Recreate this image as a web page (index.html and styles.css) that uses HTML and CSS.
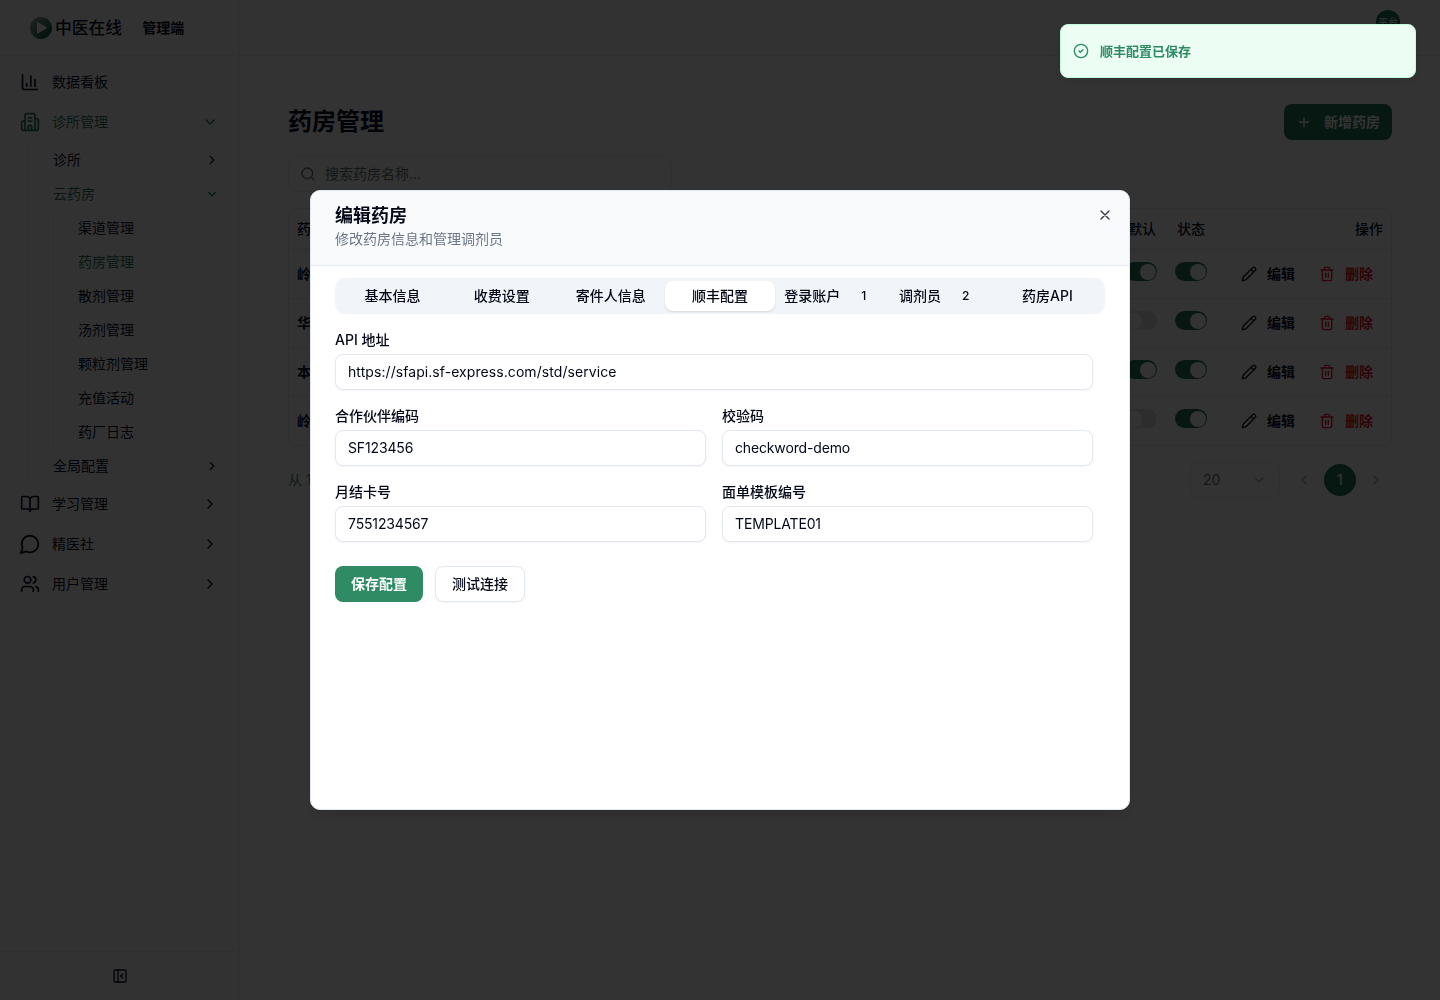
FILE: index.html
```html
<!DOCTYPE html>
<html lang="zh-CN">
<head>
  <meta charset="utf-8"/>
  <title>药房管理 - 中医在线</title>
  <link rel="stylesheet" href="styles.css">
</head>
<body>
  <!-- shared icon shapes -->
  <svg class="symbols" width="0" height="0">
    <symbol id="chevron-right" viewBox="0 0 24 24"><path d="m9 18 6-6-6-6"/></symbol>
    <symbol id="chevron-left" viewBox="0 0 24 24"><path d="m15 18-6-6 6-6"/></symbol>
    <symbol id="chevron-down" viewBox="0 0 24 24"><path d="m6 9 6 6 6-6"/></symbol>
    <symbol id="pencil" viewBox="0 0 24 24"><path d="M21.17 6.81a1 1 0 0 0-3.98-3.98L3.84 16.17a2 2 0 0 0-.5.83l-1.32 4.35a.5.5 0 0 0 .62.62l4.35-1.32a2 2 0 0 0 .83-.5zM15 5l4 4"/></symbol>
    <symbol id="trash" viewBox="0 0 24 24"><path d="M3 6h18M19 6v14a2 2 0 0 1-2 2H7a2 2 0 0 1-2-2V6M8 6V4a2 2 0 0 1 2-2h4a2 2 0 0 1 2 2v2M10 11v6M14 11v6"/></symbol>
  </svg>

  <div class="app">
    <aside class="sidebar">
      <div class="brand">
        <svg class="brand-logo" viewBox="0 0 22 22">
          <defs>
            <linearGradient id="logo-fill" x1="0" y1="0" x2="1" y2="1">
              <stop offset="0.1" stop-color="#9aa5a5"/>
              <stop offset="0.75" stop-color="#1f6650"/>
            </linearGradient>
          </defs>
          <circle cx="11" cy="11" r="11" fill="url(#logo-fill)"/>
          <path d="M7.5 5.5v10.6l9-5.3z" fill="#fff" stroke="#fff" stroke-linejoin="round"/>
        </svg>
        <span class="brand-name">中医在线</span>
        <span class="brand-role">管理端</span>
      </div>
      <nav class="menu">
        <a class="menu-item">
          <svg class="icon" viewBox="0 0 24 24"><path d="M3 3v16a2 2 0 0 0 2 2h16M18 17V9M13 17V5M8 17v-3"/></svg>
          <span>数据看板</span>
        </a>
        <a class="menu-item active">
          <svg class="icon" viewBox="0 0 24 24"><path d="M6 22V4a2 2 0 0 1 2-2h8a2 2 0 0 1 2 2v18M6 11H4a2 2 0 0 0-2 2v7a2 2 0 0 0 2 2h16a2 2 0 0 0 2-2V10a2 2 0 0 0-2-2h-2M10 7h4M10 11h4M10 22v-4a2 2 0 0 1 4 0v4"/></svg>
          <span>诊所管理</span>
          <svg class="chevron"><use href="#chevron-down"/></svg>
        </a>
        <div class="submenu">
          <a class="sub-item"><span>诊所</span><svg class="chevron"><use href="#chevron-right"/></svg></a>
          <a class="sub-item active"><span>云药房</span><svg class="chevron"><use href="#chevron-down"/></svg></a>
          <div class="submenu nested">
            <a class="sub-item">渠道管理</a>
            <a class="sub-item active">药房管理</a>
            <a class="sub-item">散剂管理</a>
            <a class="sub-item">汤剂管理</a>
            <a class="sub-item">颗粒剂管理</a>
            <a class="sub-item">充值活动</a>
            <a class="sub-item">药厂日志</a>
          </div>
          <a class="sub-item"><span>全局配置</span><svg class="chevron"><use href="#chevron-right"/></svg></a>
        </div>
        <a class="menu-item">
          <svg class="icon" viewBox="0 0 24 24"><path d="M12 7v14M3 18a1 1 0 0 1-1-1V4a1 1 0 0 1 1-1h5a4 4 0 0 1 4 4 4 4 0 0 1 4-4h5a1 1 0 0 1 1 1v13a1 1 0 0 1-1 1h-6a3 3 0 0 0-3 3 3 3 0 0 0-3-3z"/></svg>
          <span>学习管理</span>
          <svg class="chevron"><use href="#chevron-right"/></svg>
        </a>
        <a class="menu-item">
          <svg class="icon" viewBox="0 0 24 24"><path d="M7.9 20A9 9 0 1 0 4 16.1L2 22Z" transform="translate(-1.2 -1.2) scale(1.1)"/></svg>
          <span>精医社</span>
          <svg class="chevron"><use href="#chevron-right"/></svg>
        </a>
        <a class="menu-item">
          <svg class="icon" viewBox="0 0 24 24"><path d="M16 21v-2a4 4 0 0 0-4-4H6a4 4 0 0 0-4 4v2M22 21v-2a4 4 0 0 0-3-3.87M16 3.13a4 4 0 0 1 0 7.75"/><circle cx="9" cy="7" r="4"/></svg>
          <span>用户管理</span>
          <svg class="chevron"><use href="#chevron-right"/></svg>
        </a>
      </nav>
      <div class="sidebar-footer">
        <svg class="icon" viewBox="0 0 24 24"><rect x="3" y="3" width="18" height="18" rx="2"/><path d="M9 3v18M16 15l-3-3 3-3"/></svg>
      </div>
    </aside>

    <main class="main">
      <header class="topbar"><div class="avatar">平台</div></header>
      <div class="content">
        <div class="page-head">
          <h1>药房管理</h1>
          <button class="btn-add"><svg class="icon" viewBox="0 0 24 24"><path d="M5 12h14M12 5v14"/></svg>新增药房</button>
        </div>
        <div class="search">
          <svg class="icon" viewBox="0 0 24 24"><circle cx="11" cy="11" r="8"/><path d="m21 21-4.3-4.3"/></svg>
          <span>搜索药房名称...</span>
        </div>
        <div class="table">
          <div class="row head">
            <div>药房</div><div class="center">默认</div><div class="center">状态</div><div class="actions">操作</div>
          </div>
          <div class="row">
            <div>岭南</div>
            <div><i class="switch on"></i></div>
            <div><i class="switch on"></i></div>
            <div class="actions"><a><svg class="icon"><use href="#pencil"/></svg>编辑</a><a class="danger"><svg class="icon"><use href="#trash"/></svg>删除</a></div>
          </div>
          <div class="row">
            <div>华康</div>
            <div><i class="switch"></i></div>
            <div><i class="switch on"></i></div>
            <div class="actions"><a><svg class="icon"><use href="#pencil"/></svg>编辑</a><a class="danger"><svg class="icon"><use href="#trash"/></svg>删除</a></div>
          </div>
          <div class="row">
            <div>本草</div>
            <div><i class="switch on"></i></div>
            <div><i class="switch on"></i></div>
            <div class="actions"><a><svg class="icon"><use href="#pencil"/></svg>编辑</a><a class="danger"><svg class="icon"><use href="#trash"/></svg>删除</a></div>
          </div>
          <div class="row">
            <div>岭南</div>
            <div><i class="switch"></i></div>
            <div><i class="switch on"></i></div>
            <div class="actions"><a><svg class="icon"><use href="#pencil"/></svg>编辑</a><a class="danger"><svg class="icon"><use href="#trash"/></svg>删除</a></div>
          </div>
        </div>
        <div class="pager">
          <span class="pager-info">从 1</span>
          <div class="page-size">20<svg class="icon"><use href="#chevron-down"/></svg></div>
          <svg class="icon arrow"><use href="#chevron-left"/></svg>
          <span class="page-current">1</span>
          <svg class="icon arrow"><use href="#chevron-right"/></svg>
        </div>
      </div>
    </main>
  </div>

  <div class="overlay">
    <div class="dialog">
      <div class="dialog-head">
        <div>
          <h2>编辑药房</h2>
          <p>修改药房信息和管理调剂员</p>
        </div>
        <svg class="icon close" viewBox="0 0 24 24"><path d="M18 6 6 18M6 6l12 12"/></svg>
      </div>
      <div class="dialog-body">
        <div class="tabs">
          <div class="tab">基本信息</div>
          <div class="tab">收费设置</div>
          <div class="tab">寄件人信息</div>
          <div class="tab selected">顺丰配置</div>
          <div class="tab">登录账户<span class="count">1</span></div>
          <div class="tab">调剂员<span class="count">2</span></div>
          <div class="tab">药房API</div>
        </div>
        <form class="form">
          <div class="field wide">
            <label>API 地址</label>
            <input class="url" type="text" value="https://sfapi.sf-express.com/std/service">
          </div>
          <div class="field">
            <label>合作伙伴编码</label>
            <input type="text" value="SF123456">
          </div>
          <div class="field">
            <label>校验码</label>
            <input type="text" value="checkword-demo">
          </div>
          <div class="field">
            <label>月结卡号</label>
            <input type="text" value="7551234567">
          </div>
          <div class="field">
            <label>面单模板编号</label>
            <input type="text" value="TEMPLATE01">
          </div>
        </form>
        <div class="form-actions">
          <button class="btn-primary">保存配置</button>
          <button class="btn-outline">测试连接</button>
        </div>
      </div>
    </div>
  </div>

  <div class="toast">
    <svg class="icon" viewBox="0 0 24 24"><circle cx="12" cy="12" r="10"/><path d="m9 12 2 2 4-4"/></svg>
    <span>顺丰配置已保存</span>
  </div>
</body>
</html>
```
FILE: styles.css
```css
* {
  box-sizing: border-box;
}

body {
  margin: 0;
  height: 1000px;
  overflow: hidden;
  background: #fff;
  color: #020817;
  font: 14px/20px Inter, "Noto Sans CJK SC", sans-serif;
}

h1, h2, p {
  margin: 0;
}

button, input {
  font: inherit;
  color: inherit;
}

.symbols {
  position: absolute;
}

svg {
  flex: none;
}

.icon, .chevron {
  width: 16px;
  height: 16px;
  fill: none;
  stroke: currentColor;
  stroke-width: 2;
  stroke-linecap: round;
  stroke-linejoin: round;
}

.app {
  display: flex;
  height: 100%;
  color: #06102a;
}

/* sidebar */
.sidebar {
  display: flex;
  flex: none;
  flex-direction: column;
  width: 240px;
  background: #fafafa;
  border-right: 1px solid #e2e8f0;
}

.brand {
  display: flex;
  align-items: center;
  height: 56px;
  padding-left: 30px;
  border-bottom: 1px solid #e2e8f0;
}

.brand-logo {
  width: 22px;
  height: 22px;
  margin-right: 3px;
}

.brand-name {
  font-size: 16.8px;
  font-weight: 500;
}

.brand-role {
  margin-left: 20px;
  font-weight: 600;
}

.menu {
  display: flex;
  flex: 1;
  flex-direction: column;
  gap: 4px;
  padding: 8px;
}

.menu-item {
  display: flex;
  align-items: center;
  gap: 12px;
  height: 36px;
  padding: 0 13px 0 12px;
}

.menu-item .icon {
  width: 20px;
  height: 20px;
}

.menu .chevron {
  margin-left: auto;
}

.active {
  color: #28765b;
}

.submenu {
  display: flex;
  flex-direction: column;
  gap: 2px;
  margin-left: 20px;
  padding-left: 12px;
  border-left: 1px solid #e2e8f0;
}

.submenu.nested {
  margin-left: 12px;
}

.sub-item {
  display: flex;
  align-items: center;
  height: 32px;
  padding: 0 12px;
}

.sub-item .chevron {
  width: 14px;
  height: 14px;
}

.sidebar-footer {
  display: flex;
  align-items: center;
  justify-content: center;
  height: 49px;
  border-top: 1px solid #e2e8f0;
}

/* page */
.main {
  flex: 1;
}

.topbar {
  display: flex;
  justify-content: flex-end;
  height: 56px;
  padding: 10px 40px 0;
  background: #fafafa;
  border-bottom: 1px solid #e2e8f0;
}

.avatar {
  width: 24px;
  height: 24px;
  border-radius: 50%;
  background: #24735a;
  color: #fff;
  font-size: 10px;
  line-height: 24px;
  text-align: center;
}

.content {
  padding: 48px;
}

.page-head {
  display: flex;
  align-items: center;
  justify-content: space-between;
  height: 36px;
}

.page-head h1 {
  font-size: 24px;
  font-weight: 700;
}

.btn-add {
  display: flex;
  align-items: center;
  justify-content: space-between;
  width: 108px;
  height: 36px;
  padding: 0 12px;
  border: 0;
  border-radius: 8px;
  background: #24735a;
  color: #fff;
  font-weight: 600;
}

.search {
  display: flex;
  align-items: center;
  gap: 9px;
  width: 384px;
  height: 36px;
  margin: 16px 0;
  padding: 0 11px;
  border: 1px solid #e2e8f0;
  border-radius: 8px;
  color: #5a7a72;
}

.table {
  border: 1px solid #e2e8f0;
  border-radius: 8px;
}

.row {
  display: grid;
  grid-template-columns: 828px 50px 48px 1fr;
  height: 49px;
  border-bottom: 1px solid #e2e8f0;
  font-weight: 600;
}

.row:last-child {
  height: 48px;
  border-bottom: 0;
}

.row > div {
  padding: 14px 8px;
}

.row.head {
  height: 41px;
  font-weight: 500;
}

.row.head > div {
  padding: 10px 8px;
}

.row .center {
  text-align: center;
}

.row > .actions {
  display: flex;
  justify-content: flex-end;
}

.actions a {
  display: flex;
  align-items: center;
  gap: 10px;
  padding: 0 10px;
}

.actions a + a {
  margin-left: 4px;
}

.danger {
  color: #e8112d;
}

.switch {
  display: block;
  width: 32px;
  height: 19px;
  margin-top: -2px;
  padding: 1.5px 1px;
  border-radius: 10px;
  background: #e2e2e2;
}

.switch::after {
  content: "";
  display: block;
  width: 16px;
  height: 16px;
  border-radius: 50%;
  background: #fff;
}

.switch.on {
  background: #24735a;
}

.switch.on::after {
  margin-left: auto;
}

.pager {
  display: flex;
  align-items: center;
  margin-top: 16px;
  padding-right: 8px;
  color: #5a7a72;
}

.pager-info {
  flex: 1;
}

.page-size {
  display: flex;
  align-items: center;
  justify-content: space-between;
  width: 90px;
  height: 36px;
  margin-right: 16px;
  padding: 0 12px;
  border: 1px solid #e2e8f0;
  border-radius: 8px;
}

.pager .icon {
  stroke: #a8b0bb;
}

.page-current {
  width: 32px;
  height: 32px;
  margin: 0 12px;
  border-radius: 50%;
  background: #24735a;
  color: #fff;
  font-weight: 500;
  line-height: 32px;
  text-align: center;
}

/* dialog */
.overlay {
  position: fixed;
  inset: 0;
  display: flex;
  align-items: center;
  justify-content: center;
  background: rgba(0, 0, 0, .8);
}

.dialog {
  width: 820px;
  height: 620px;
  overflow: hidden;
  border: 1px solid #e2e8f0;
  border-radius: 10px;
  background: #fff;
  box-shadow: 0 10px 15px -3px rgba(0, 0, 0, .1);
}

.dialog-head {
  display: flex;
  justify-content: space-between;
  height: 75px;
  padding: 13px 16px 0 24px;
  border-bottom: 1px solid #e2e8f0;
  background: #f8fafc;
}

.dialog-head h2 {
  font-size: 18px;
  font-weight: 600;
  line-height: 24px;
}

.dialog-head p {
  margin-top: 1px;
  color: #6b7689;
}

.close {
  margin-top: 3px;
  opacity: .8;
}

.dialog-body {
  padding: 12px 24px;
}

.tabs {
  display: grid;
  grid-template-columns: repeat(7, 1fr);
  height: 36px;
  padding: 3px;
  border-radius: 10px;
  background: #f1f5f9;
}

.tab {
  display: flex;
  align-items: center;
  justify-content: center;
  gap: 13px;
  border-radius: 8px;
  font-weight: 500;
  white-space: nowrap;
}

.tab.selected {
  background: #fff;
  box-shadow: 0 1px 2px rgba(0, 0, 0, .12);
}

.count {
  padding: 0 8px;
  font-size: 12px;
}

.form {
  display: grid;
  grid-template-columns: 1fr 1fr;
  gap: 16px;
  margin: 16px 12px 24px 0;
}

.field.wide {
  grid-column: span 2;
}

.field label {
  display: block;
  margin-bottom: 4px;
  font-weight: 500;
}

.field input {
  display: block;
  width: 100%;
  height: 36px;
  padding: 0 12px 2px;
  border: 1px solid #e2e8f0;
  border-radius: 8px;
  background: #fff;
  box-shadow: 0 1px 2px rgba(0, 0, 0, .05);
  letter-spacing: -.15px;
}

.field .url {
  letter-spacing: .07px;
}

.form-actions {
  display: flex;
  gap: 12px;
}

.form-actions button {
  height: 36px;
  padding: 0 16px;
  border: 0;
  border-radius: 8px;
  font-weight: 600;
}

.form-actions .btn-primary {
  background: #2e8b63;
  color: #fff;
}

.form-actions .btn-outline {
  border: 1px solid #e2e8f0;
  background: #fff;
  box-shadow: 0 1px 2px rgba(0, 0, 0, .05);
  font-weight: 500;
}

/* toast */
.toast {
  position: fixed;
  top: 24px;
  right: 24px;
  display: flex;
  align-items: center;
  gap: 11px;
  width: 356px;
  height: 54px;
  padding: 0 12px;
  border: 1px solid #bffcd9;
  border-radius: 8px;
  background: #ecfdf3;
  box-shadow: 0 4px 12px rgba(0, 0, 0, .1);
  color: #2e8b63;
  font-size: 13px;
  font-weight: 600;
}

.toast span {
  padding-bottom: 1px;
}
```
